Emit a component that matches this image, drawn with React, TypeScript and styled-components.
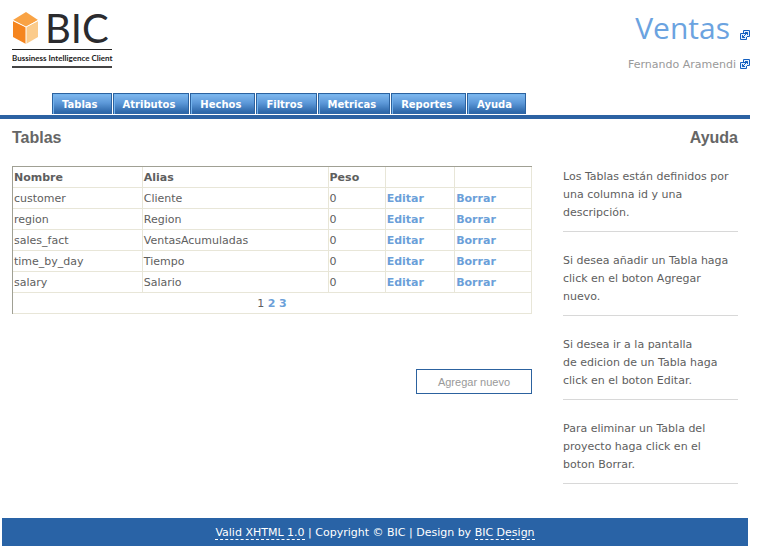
import React from "react";
import styled, { createGlobalStyle } from "styled-components";

const GlobalStyle = createGlobalStyle`
  * { box-sizing: border-box; }
  body {
    margin: 0;
    background: #fff;
    color: #5e5e5e;
    font: 11px/18px "DejaVu Sans", Verdana, sans-serif;
  }
`;

const Page = styled.div`
  margin-right: 7px;
`;

const Header = styled.header`
  display: flex;
  justify-content: space-between;
  align-items: flex-start;
  height: 93px;
  padding-left: 8px;
`;

const Logo = styled.svg`
  display: block;
  width: 108px;
  height: 72px;
`;

const Account = styled.div`
  display: flex;
  flex-direction: column;
  align-items: flex-end;
  padding-top: 8px;
`;

const ProjectLine = styled.div`
  display: flex;
  align-items: flex-end;
  gap: 10px;
  height: 40px;
`;

const Project = styled.h1`
  margin: 0;
  color: #6ba3e0;
  font: 400 30px/40px "Open Sans", "Noto Sans", sans-serif;
`;

const UserLine = styled.div`
  display: flex;
  align-items: center;
  gap: 4px;
  margin-top: 8px;
  color: #999;
`;

const IconLink = styled.a`
  display: block;
  height: 18px;
  padding-top: 3px;

  svg { display: block; }
`;

const ProjectIconLink = styled(IconLink)`
  height: 40px;
  padding-top: 22px;
`;

const Nav = styled.nav`
  border-bottom: 4px solid #2c62a3;
`;

const Tabs = styled.ul`
  display: flex;
  gap: 1px;
  margin: 0;
  padding: 0 0 1px 52px;
  list-style: none;
`;

const Tab = styled.a`
  display: block;
  height: 21px;
  padding: 0 13px 0 9px;
  border: 1px solid #2c629f;
  border-bottom: 0;
  background: linear-gradient(#80b9ef, #5c98d8 45%, #2e68aa 90%);
  box-shadow: inset 1px 1px 0 #74b4ee;
  color: #fff;
  font-size: 10px;
  font-weight: 700;
  line-height: 21px;
  text-decoration: none;
`;

const Content = styled.div`
  display: grid;
  grid-template-columns: minmax(0, 1fr) 175px;
  gap: 31px;
  padding: 9px 12px 0;
`;

const Title = styled.h2`
  margin: 0 0 18px;
  color: #666;
  font: 700 16px/20px "Liberation Sans", Arial, sans-serif;
`;

const Grid = styled.table`
  width: 100%;
  table-layout: fixed;
  border-collapse: separate;
  border-spacing: 0;
  border-top: 1px solid #a0a094;
  border-left: 1px solid #a0a094;

  th, td {
    height: 21px;
    padding: 1px 1px 0;
    border-right: 1px solid #e8e6d8;
    border-bottom: 1px solid #e8e6d8;
    text-align: left;
    line-height: 19px;
  }
`;

const Column = styled.col<{ $share: number }>`
  width: ${(p) => p.$share}%;
`;

const PagerCell = styled.td`
  && { text-align: center; }
`;

const ActionLink = styled.a`
  color: #6b9fd9;
  font-weight: 700;
  text-decoration: none;
`;

const Actions = styled.div`
  display: flex;
  justify-content: flex-end;
  margin-top: 55px;
`;

const AddButton = styled.button`
  width: 116px;
  height: 25px;
  padding: 0;
  border: 1px solid #2c629f;
  background: #fff;
  color: #999;
  font: 11px "Liberation Sans", Arial, sans-serif;
`;

const HelpTitle = styled(Title)`
  margin-bottom: 20px;
  text-align: right;
`;

const HelpText = styled.p`
  margin: 0 0 20px;
  padding-bottom: 9px;
  border-bottom: 1px solid #d8d8d8;
  white-space: pre-line;
`;

const Footer = styled.footer`
  margin: 14px 2px 0;
  padding: 6px 0 4px;
  background: #2963a6;
  color: #fff;
  text-align: center;
`;

const FooterLink = styled.a`
  color: #fff;
  text-decoration: none;
  border-bottom: 1px dashed #fff;
`;

const tabs = ["Tablas", "Atributos", "Hechos", "Filtros", "Metricas", "Reportes", "Ayuda"];

const columns = [25, 35.8, 11, 13.4, 14.8];

const rows = [
  { name: "customer", alias: "Cliente", weight: 0 },
  { name: "region", alias: "Region", weight: 0 },
  { name: "sales_fact", alias: "VentasAcumuladas", weight: 0 },
  { name: "time_by_day", alias: "Tiempo", weight: 0 },
  { name: "salary", alias: "Salario", weight: 0 },
];

const help = [
  "Los Tablas están definidos por una columna id y una descripción.",
  "Si desea añadir un Tabla haga click en el boton Agregar nuevo.",
  "Si desea ir a la pantalla\nde edicion de un Tabla haga click en el boton Editar.",
  "Para eliminar un Tabla del proyecto haga click en el\nboton Borrar.",
];

function SwitchIcon() {
  return (
    <svg width="10" height="10" viewBox="0 0 10 10" fill="none" stroke="#1460c0">
      <path d="M3.500.5h6v6h-6z" fill="#e4f1ff" />
      <path d="M.5 3.500h6v6h-6z" fill="#e4f1ff" />
      <path d="M4 4h3v3H4z" fill="#e4f1ff" stroke="none" />
      <path d="M5 2.500h2.500V5M2.500 5v2.500H5M2.500 7.500l5-5" />
    </svg>
  );
}

function BicLogo() {
  return (
    <Logo viewBox="8 0 108 72" role="img" aria-label="BIC Bussiness Intelligence Client">
      <path d="M13 21l13 6v17l-13-7z" fill="#f5851f" />
      <path d="M26 27l12-6v16l-12 7z" fill="#fbcb8b" />
      <path d="M13 20l13-8 12 8-12 7z" fill="#f9a345" />
      <path d="M13 20.500l13 6.500 12-6.500M26 27v17" fill="none" stroke="#fff" />
      <text x="45" y="43" fontFamily="Lato, sans-serif" fontSize="40" fill="#2b2b2e">BIC</text>
      <path d="M12 49.500h100" stroke="#222" />
      <path d="M12 67h100" stroke="#444" strokeWidth="2" />
      <text x="12" y="61" fontFamily="Lato, sans-serif" fontSize="8" fontWeight="700" fill="#222">
        Bussiness Intelligence Client
      </text>
    </Logo>
  );
}

export default function App() {
  return (
    <>
      <GlobalStyle />
      <Page>
        <Header>
          <BicLogo />
          <Account>
            <ProjectLine>
              <Project>Ventas</Project>
              <ProjectIconLink href="#proyecto" aria-label="Cambiar proyecto"><SwitchIcon /></ProjectIconLink>
            </ProjectLine>
            <UserLine>
              <span>Fernando Aramendi</span>
              <IconLink href="#usuario" aria-label="Cambiar usuario"><SwitchIcon /></IconLink>
            </UserLine>
          </Account>
        </Header>
        <Nav>
          <Tabs>
            {tabs.map((tab) => (
              <li key={tab}><Tab href={`#${tab.toLowerCase()}`}>{tab}</Tab></li>
            ))}
          </Tabs>
        </Nav>
        <Content>
          <main>
            <Title>Tablas</Title>
            <Grid>
              <colgroup>
                {columns.map((share, i) => <Column key={i} $share={share} />)}
              </colgroup>
              <thead>
                <tr><th>Nombre</th><th>Alias</th><th>Peso</th><th /><th /></tr>
              </thead>
              <tbody>
                {rows.map((row) => (
                  <tr key={row.name}>
                    <td>{row.name}</td>
                    <td>{row.alias}</td>
                    <td>{row.weight}</td>
                    <td><ActionLink href={`#editar-${row.name}`}>Editar</ActionLink></td>
                    <td><ActionLink href={`#borrar-${row.name}`}>Borrar</ActionLink></td>
                  </tr>
                ))}
              </tbody>
              <tfoot>
                <tr>
                  <PagerCell colSpan={5}>
                    1 <ActionLink href="#pagina-2">2</ActionLink> <ActionLink href="#pagina-3">3</ActionLink>
                  </PagerCell>
                </tr>
              </tfoot>
            </Grid>
            <Actions><AddButton type="button">Agregar nuevo</AddButton></Actions>
          </main>
          <aside>
            <HelpTitle>Ayuda</HelpTitle>
            {help.map((text) => <HelpText key={text}>{text}</HelpText>)}
          </aside>
        </Content>
        <Footer>
          <FooterLink href="#xhtml">Valid XHTML 1.0</FooterLink> | Copyright © BIC | Design by{" "}
          <FooterLink href="#design">BIC Design</FooterLink>
        </Footer>
      </Page>
    </>
  );
}
